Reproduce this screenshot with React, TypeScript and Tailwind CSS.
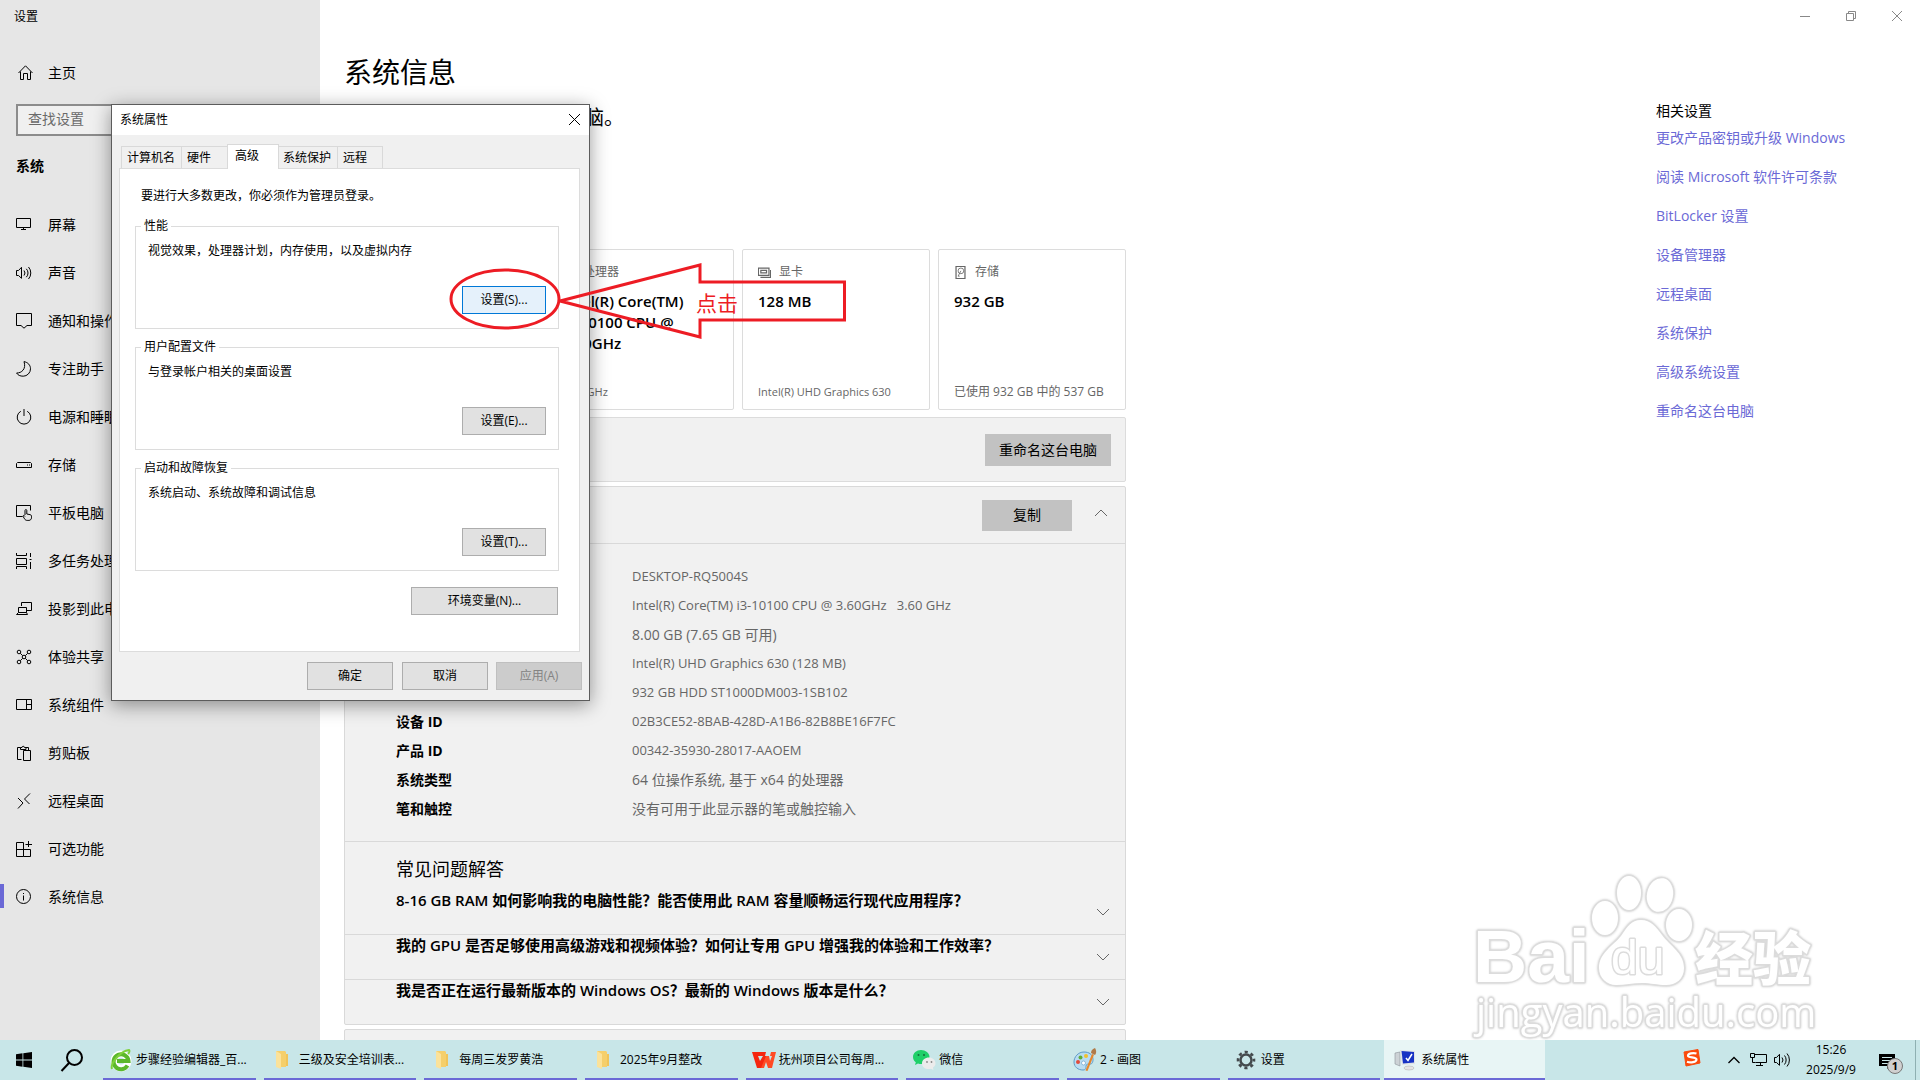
import React from 'react';

type NavItem = { label: string; icon: React.ReactNode; active?: boolean };

const Glyph = ({ children, size = 16, color = 'currentColor' }: { children: React.ReactNode; size?: number; color?: string }) => (
  <svg width={size} height={size} viewBox="0 0 16 16" fill="none" stroke={color} strokeWidth={1} className="shrink-0">
    {children}
  </svg>
);

const Chevron = ({ up }: { up?: boolean }) => (
  <svg width="14" height="8" viewBox="0 0 14 8" fill="none" stroke="#666" className="shrink-0">
    <path d={up ? 'M1 7l6-6 6 6' : 'M1 1l6 6 6-6'} />
  </svg>
);

const navItems: NavItem[] = [
  { label: '屏幕', icon: <path d="M.5 1.5h14v9H.5zM7.5 10.5v2M5 12.5h5" /> },
  { label: '声音', icon: <path d="M.5 5.5h2l3-3.2v11L2.5 10.5h-2zM8 5.5a4 4 0 0 1 0 5M10.300 3.800a6 6 0 0 1 0 8.400M12.500 2a9 9 0 0 1 0 12" /> },
  { label: '通知和操作', icon: <path d="M.5.5h15v12h-4.500L8 15.200 5 12.500H.5z" /> },
  { label: '专注助手', icon: <path d="M8 .6c4 .8 6.500 3.600 6.500 7.200a7.400 7.400 0 0 1-7.300 7.400c-3 0-5.300-1-6.600-3.200C5.500 12.200 10.500 8 8 .6z" /> },
  { label: '电源和睡眠', icon: <path d="M8 0v7M4.800 2.300a6.800 6.800 0 1 0 6.400 0" /> },
  { label: '存储', icon: <path d="M1.500 5.500h13l1 1v4H.5v-4zM11 8h1M13 8h1" /> },
  { label: '平板电脑', icon: <path d="M6.500 11.500h-6v-11h14v5M9 10V5.500c0-1.300 1.800-1.300 1.800 0V9l3.500.7c.8.2 1.200.8 1.200 1.500v1.600c0 1.400-1.200 2.600-2.600 2.600h-1.700c-1.200 0-2-.5-2.600-1.500L6.800 11c.8-1 1.600-.5 2.200.4" /> },
  { label: '多任务处理', icon: <path d="M.5 0v2.500h10V0M.5 5.500h10v6H.5zM.5 16v-2.500h10V16M14.500 0v4M14.500 9v7M13.500 6.500h2" /> },
  { label: '投影到此电脑', icon: <path d="M5.500 5V1.500h10v8h-4.500M2.500 6.500h8v5h-8zM2.500 11.500l-2 2h11l-1-2" /> },
  {
    label: '体验共享',
    icon: (
      <>
        <circle cx="3" cy="3" r="1.800" /><circle cx="13" cy="3" r="1.800" />
        <circle cx="3" cy="13" r="1.800" /><circle cx="13" cy="13" r="1.800" />
        <circle cx="8" cy="8" r="1.800" />
        <path d="M4.300 4.300l2.400 2.400M11.700 4.300L9.300 6.700M4.300 11.700l2.400-2.400M11.700 11.700L9.300 9.300" />
      </>
    ),
  },
  { label: '系统组件', icon: <path d="M.5 2.500h15v10H.5zM10.500 2.500v10M10.500 7.500h5" /> },
  { label: '剪贴板', icon: <path d="M5.500 14.500h-4v-12h3M9.500 2.500h3v3M4.500 4.500v-2h1.500a1.200 1.200 0 0 1 2.400 0h1.600v2zM7.500 5.500h7v10h-7z" /> },
  { label: '远程桌面', icon: <path d="M2 5l5 5-5 5.500M14 .5L8.500 6l5 5" /> },
  { label: '可选功能', icon: <path d="M.5 1.500h7v14h-7zM.5 8.500h14v7h-7M12.500 0v6M9.500 3.500h6.500" /> },
  { label: '系统信息', active: true, icon: <><circle cx="7.500" cy="7.500" r="7" /><path d="M7.500 6.500v5M7.500 4v1" /></> },
];

const specs = [
  ['设备名称', 'DESKTOP-RQ5004S'],
  ['处理器', 'Intel(R) Core(TM) i3-10100 CPU @ 3.60GHz\u00a0\u00a0 3.60 GHz'],
  ['机带 RAM', '8.00 GB (7.65 GB 可用)'],
  ['图形卡', 'Intel(R) UHD Graphics 630 (128 MB)'],
  ['存储', '932 GB HDD ST1000DM003-1SB102'],
  ['设备 ID', '02B3CE52-8BAB-428D-A1B6-82B8BE16F7FC'],
  ['产品 ID', '00342-35930-28017-AAOEM'],
  ['系统类型', '64 位操作系统, 基于 x64 的处理器'],
  ['笔和触控', '没有可用于此显示器的笔或触控输入'],
];

const links = ['更改产品密钥或升级 Windows', '阅读 Microsoft 软件许可条款', 'BitLocker 设置', '设备管理器', '远程桌面', '系统保护', '高级系统设置', '重命名这台电脑'];

const hasChinese = (text: string) => /[\u4e00-\u9fff]/.test(text);

const Sidebar = () => (
  <aside className="w-[320px] shrink-0 bg-[#e6e6e6]">
    <div className="flex h-[34px] items-center pl-3.5 text-xs">设置</div>
    <a href="#home" className="mt-[15px] flex h-12 items-center gap-3.5 pl-[18px] text-sm">
      <Glyph><path d="M.5 8L7.500.8 14.500 8M2.500 6.500v8h3v-6h4v6h3v-8" /></Glyph>
      主页
    </a>
    <input
      type="text"
      aria-label="查找设置"
      placeholder="查找设置"
      className="mx-4 mt-[7px] block h-8 w-[288px] border-2 border-[#8c8c8c] bg-[#f0f0f0] px-2.5 pb-1 text-sm placeholder:text-[#6a6a6a]"
    />
    <h2 className="mt-5 pl-4 text-sm leading-5 font-bold">系统</h2>
    <nav className="mt-[25px]">
      {navItems.map((item) => (
        <a key={item.label} href="#nav" className="relative flex h-12 items-center gap-4 pl-4 text-sm">
          {item.active && <span className="absolute top-[11px] left-0 h-6 w-1 bg-[#6b69d6]" />}
          <Glyph>{item.icon}</Glyph>
          {item.label}
        </a>
      ))}
    </nav>
  </aside>
);

const Card = ({ icon, title, value, note }: { icon: React.ReactNode; title: string; value: React.ReactNode; note: string }) => (
  <div className="flex h-[161px] w-[188px] shrink-0 flex-col rounded-xs border border-[#dcdcdc] bg-white px-[15px] pt-3.5 pb-[9px] first:w-auto first:flex-1">
    <div className="flex items-center gap-2 text-xs leading-4 text-[#666]">
      <Glyph size={13} color="#666">{icon}</Glyph>
      {title}
    </div>
    <div className="mt-[11px] text-[15px] leading-[21px] font-semibold">{value}</div>
    <div className={hasChinese(note) ? 'mt-auto text-xs leading-4 whitespace-nowrap text-[#666]' : 'mt-auto text-[11px] leading-4 whitespace-nowrap text-[#666]'}>{note}</div>
  </div>
);

const Faq = ({ text }: { text: string }) => (
  <div className="flex h-[45px] justify-between border-t border-[#d9d9d9] pl-[51px]">
    <p className="text-[15px] leading-5 font-semibold">{text}</p>
    <button aria-label="展开" className="mt-[18px] mr-[15px] h-2"><Chevron /></button>
  </div>
);

const Main = () => (
  <main className="flex min-w-0 flex-1 flex-col overflow-hidden">
    <div className="flex h-8 shrink-0 justify-end text-[#888]">
      <button aria-label="最小化" className="flex w-[46px] items-center justify-center"><svg width="10" height="10" stroke="currentColor"><path d="M0 5.500h10" /></svg></button>
      <button aria-label="还原" className="flex w-[46px] items-center justify-center"><svg width="10" height="10" fill="none" stroke="currentColor"><path d="M.5 2.500h7v7h-7zM2.500 2.500v-2h7v7h-2" /></svg></button>
      <button aria-label="关闭" className="flex w-[46px] items-center justify-center"><svg width="10" height="10" stroke="currentColor"><path d="M0 0l10 10M10 0L0 10" /></svg></button>
    </div>
    <div className="flex justify-between pl-6">
      <section className="w-[782px] shrink-0">
        <h1 className="mt-5 text-[28px] leading-10">系统信息</h1>
        <p className="mt-3 text-xl leading-7">系统正在监控并保护你的电脑。</p>
        <div className="mt-[117px] flex gap-2">
          <Card title="设备" value="DESKTOP" note="" icon={<path d="M.5 2.500h15v10H.5z" />} />
          <Card title="处理器" value={<>Intel(R) Core(TM)<br />i3-10100 CPU @<br />3.60GHz</>} note="3.60 GHz" icon={<path d="M2.500 2.500h11v11h-11zM5.500 5.500h5v5h-5z" />} />
          <Card title="显卡" value="128 MB" note="Intel(R) UHD Graphics 630" icon={<path d="M.5 2.500h13v9H.5zM3.500 5.500h7v3h-7zM15.500 5v9H3" strokeWidth={1.500} />} />
          <Card title="存储" value="932 GB" note="已使用 932 GB 中的 537 GB" icon={<><path d="M2.500.5h11v15h-11z" strokeWidth={1.500} /><circle cx="8.500" cy="6" r="3.500" /><path d="M8.500 6L5 12.500h2" /></>} />
        </div>
        <div className="mt-[7px] flex h-[65px] items-center justify-end rounded-xs border border-[#dcdcdc] bg-[#f1f1f1] pr-3.5">
          <button className="h-8 w-[126px] bg-[#c2c2c2] text-sm">重命名这台电脑</button>
        </div>
        <div className="mt-1 rounded-xs border border-[#d9d9d9] bg-[#f1f1f1]">
          <div className="flex h-[57px] items-center justify-end border-b border-[#d9d9d9] pr-[17px]">
            <button className="h-[31px] w-[90px] bg-[#c2c2c2] text-sm">复制</button>
            <button aria-label="折叠" className="mb-1 ml-[22px]"><Chevron up /></button>
          </div>
          <dl className="pt-[18px] pb-[18px] pl-[51px]">
            {specs.map(([name, value]) => (
              <div key={name} className="flex h-[29px] items-center">
                <dt className="w-[236px] text-sm font-bold">{name}</dt>
                <dd className={hasChinese(value) ? 'text-sm text-[#666]' : 'text-[13px] text-[#666]'}>{value}</dd>
              </div>
            ))}
          </dl>
          <div className="h-[93px] border-t border-[#d9d9d9] pt-[15px] pl-[51px]">
            <h2 className="text-lg leading-6">常见问题解答</h2>
            <div className="flex justify-between">
              <p className="mt-[7px] text-[15px] leading-6 font-semibold">8-16 GB RAM 如何影响我的电脑性能？能否使用此 RAM 容量顺畅运行现代应用程序？</p>
              <button aria-label="展开" className="mt-[27px] mr-[15px] h-2"><Chevron /></button>
            </div>
          </div>
          <Faq text="我的 GPU 是否足够使用高级游戏和视频体验？如何让专用 GPU 增强我的体验和工作效率？" />
          <Faq text="我是否正在运行最新版本的 Windows OS？最新的 Windows 版本是什么？" />
        </div>
        <div className="mt-1 h-12 rounded-xs border border-[#d9d9d9] bg-[#f1f1f1]" />
      </section>
      <aside className="w-[264px] pt-[69px]">
        <h2 className="text-sm leading-5">相关设置</h2>
        <ul className="mt-[7px] text-sm">
          {links.map((link) => (
            <li key={link} className="h-[39px] leading-5">
              <a href="#related" className="text-[#6b69d6]">{link}</a>
            </li>
          ))}
        </ul>
      </aside>
    </div>
  </main>
);

const buttonStyle = 'h-7 border border-[#adadad] bg-[#e1e1e1] text-xs';

const Group = ({ title, text, button, focused }: { title: string; text: string; button: string; focused?: boolean }) => (
  <fieldset className="mb-2.5 flex h-[111px] flex-col border border-[#dcdcdc] pr-3 pl-3">
    <legend className="-ml-[7px] px-[3px] leading-4">{title}</legend>
    <p className="mt-[9px] leading-4">{text}</p>
    <button className={focused ? 'mt-[27px] h-7 w-[84px] self-end border border-[#0078d7] bg-[#e5f1fb] text-xs' : 'mt-[27px] h-7 w-[84px] self-end border border-[#adadad] bg-[#e1e1e1] text-xs'}>
      {button}
    </button>
  </fieldset>
);

const tabStyle = 'h-[22px] border-t border-l border-[#d9d9d9] bg-[#f0f0f0] pl-[5px] text-left';

const SystemProperties = () => (
  <div role="dialog" aria-label="系统属性" className="absolute top-[104px] left-[111px] w-[479px] border border-[#5c5c5c] bg-[#f0f0f0] text-xs shadow-[0_4px_18px_rgba(0,0,0,0.4)]">
    <div className="flex h-[30px] items-center justify-between bg-white pr-[9px] pl-2">
      系统属性
      <button aria-label="关闭" className="pb-0.5"><svg width="11" height="11" stroke="#000"><path d="M0 0l11 11M11 0L0 11" /></svg></button>
    </div>
    <div role="tablist" className="flex h-[33px] items-end pl-[9px]">
      <button role="tab" className={`${tabStyle} w-[60px]`}>计算机名</button>
      <button role="tab" className={`${tabStyle} w-[46px]`}>硬件</button>
      <button role="tab" aria-selected className="relative z-10 -mb-px h-[25px] w-[52px] border border-b-0 border-[#d9d9d9] bg-white pb-[3px] pl-[7px] text-left">高级</button>
      <button role="tab" className="h-[22px] w-[58px] border-t border-[#d9d9d9] bg-[#f0f0f0] pl-1 text-left">系统保护</button>
      <button role="tab" className={`${tabStyle} w-[46px] border-r`}>远程</button>
    </div>
    <div className="mr-[9px] ml-[7px] border border-[#dcdcdc] bg-white pt-[19px] pr-5 pb-9 pl-[15px]">
      <p className="mb-3.5 pl-1.5 leading-4">要进行大多数更改，你必须作为管理员登录。</p>
      <Group title="性能" text="视觉效果，处理器计划，内存使用，以及虚拟内存" button="设置(S)..." focused />
      <Group title="用户配置文件" text="与登录帐户相关的桌面设置" button="设置(E)..." />
      <Group title="启动和故障恢复" text="系统启动、系统故障和调试信息" button="设置(T)..." />
      <div className="flex justify-end pt-1.5 pr-px">
        <button className={`${buttonStyle} w-[147px]`}>环境变量(N)...</button>
      </div>
    </div>
    <div className="flex justify-end gap-2 pt-2.5 pr-[7px] pb-2.5">
      <button className={`${buttonStyle} w-[86px]`}>确定</button>
      <button className={`${buttonStyle} ml-px w-[86px]`}>取消</button>
      <button disabled className="h-7 w-[86px] border border-[#bfbfbf] bg-[#cccccc] text-xs text-[#838383]">应用(A)</button>
    </div>
  </div>
);

const Callout = () => (
  <svg width="400" height="90" viewBox="0 0 400 90" className="pointer-events-none absolute top-[255px] left-[448px]" fill="none" stroke="#ed1c24" strokeWidth="3">
    <ellipse cx="57" cy="44" rx="54" ry="29" />
    <path d="M112 46L252 10v17h144.500v38H252v17z" />
    <text x="248" y="56" fontSize="21" fill="#ed1c24" stroke="none">点击</text>
  </svg>
);

const WatermarkShapes = () => (
  <>
    <text x="3" y="122" fontSize="75" fontWeight="700" fontFamily="'Liberation Sans', sans-serif">Bai</text>
    <ellipse cx="135" cy="58" rx="13" ry="17" />
    <ellipse cx="159" cy="33" rx="12" ry="17" />
    <ellipse cx="190" cy="35" rx="13" ry="17" transform="rotate(12 190 35)" />
    <ellipse cx="209" cy="65" rx="13" ry="16" />
    <path d="M171 60c10 0 15 7 21 15 8 11 22 18 22 33 0 11-8 17-18 17-9 0-15-2-24-2s-17 2-26 2c-9 0-17-7-17-17 0-15 14-22 22-32 6-9 10-16 20-16z" />
    <text x="141" y="114" fontSize="48" fontFamily="'Liberation Sans', sans-serif">du</text>
    <text x="225" y="120" fontSize="58" fontWeight="900" fontFamily="'Noto Sans CJK SC', sans-serif">经验</text>
    <text x="6" y="167" fontSize="40" fontFamily="'Open Sans', sans-serif">jingyan.baidu.com</text>
  </>
);

const Watermark = () => (
  <svg
    width="360"
    height="180"
    viewBox="0 0 360 180"
    className="pointer-events-none absolute right-[90px] bottom-10 drop-shadow-[0_0_1px_rgba(0,0,0,0.2)]"
    fill="#fff"
    stroke="#dcdcdc"
    strokeWidth="3"
    paintOrder="stroke"
    strokeLinejoin="round"
  >
    <WatermarkShapes />
  </svg>
);

const FolderIcon = () => (
  <svg width="14" height="20" viewBox="0 0 14 20">
    <path d="M1 1h9l1 1v15H1z" fill="#f5cf6b" />
    <path d="M1 1l5 3v15l-5-2z" fill="#fbe29a" />
    <path d="M11 4h2v12h-2z" fill="#f0c45a" />
  </svg>
);

const BrowserIcon = () => (
  <svg width="22" height="24" viewBox="0 0 22 24" fill="none">
    <circle cx="11" cy="13" r="7" stroke="#fff" strokeWidth="7" />
    <path d="M17.500 17.500A7.500 7.500 0 1 1 18.500 13H7" stroke="#5cb82c" strokeWidth="4" />
    <path d="M2 21C0 16 10 3 19 2c1 1 0 3-1 4" stroke="#7fd13b" strokeWidth="2" />
  </svg>
);

const WpsIcon = () => (
  <svg width="24" height="16" viewBox="0 0 24 16">
    <path d="M0 0h14l-1 4H6l2 5 3-5h4l-5 12H5z" fill="#f5260f" />
    <path d="M14 4h3l1 5 2-5h-2l1-4h5l-4 16h-4l-2-6-2 6h-3z" fill="#ff4a24" />
  </svg>
);

const WechatIcon = () => (
  <svg width="24" height="24" viewBox="0 0 24 24">
    <path d="M9 2C4.500 2 1 5 1 9c0 2.200 1 4 2.800 5.300L3 17l3-1.500c6 2 11.500-1.500 11.500-6.500 0-4-4-7-8.500-7z" fill="#1fd069" />
    <path d="M17 9.500c-4 0-7 2.500-7 6 0 3.700 4 6.500 9 5.300l2.500 1.200-.6-2.400c1.700-1 2.600-2.500 2.600-4.100 0-3.500-3-6-6.500-6z" fill="#ececec" />
    <g fill="#126b3a"><circle cx="6.500" cy="7" r="1" /><circle cx="12" cy="7" r="1" /></g>
    <g fill="#888"><circle cx="15" cy="14" r=".9" /><circle cx="19.500" cy="14" r=".9" /></g>
  </svg>
);

const PaintIcon = () => (
  <svg width="24" height="24" viewBox="0 0 24 24">
    <path d="M11 4C5 4 1 9 1 14s4 8 9 8c3 0 3-2 3-4s2-2 5-2c3-1 4-12-7-12z" fill="#b8dcf2" stroke="#5d9bc7" />
    <circle cx="5" cy="14" r="2" fill="#e14b3b" /><circle cx="7.500" cy="9.500" r="2" fill="#5fae3c" />
    <circle cx="13" cy="8" r="2" fill="#f2c12e" /><circle cx="10.500" cy="15" r="2" fill="#fff" stroke="#5d9bc7" strokeWidth=".6" />
    <path d="M19 6l2 .8L14.500 23l-2-.5z" fill="#e8872b" />
    <path d="M18 5c0-3 2-4 4-5 1 2 2 4 0 7z" fill="#b07a48" />
  </svg>
);

const GearIcon = () => (
  <svg width="20" height="20" viewBox="0 0 20 20" fill="none" stroke="#444a4d">
    <circle cx="10" cy="10" r="5.500" strokeWidth="2.500" />
    <circle cx="10" cy="10" r="8" strokeWidth="2.600" strokeDasharray="3.140 3.140" strokeDashoffset="1.570" />
  </svg>
);

const MonitorIcon = () => (
  <svg width="24" height="22" viewBox="0 0 24 22">
    <path d="M1 4l5-1v14l-5-2z" fill="#cdd2d6" stroke="#8b9299" strokeWidth=".6" />
    <path d="M6 1l15 1v13L8 16z" fill="#dfe3e6" />
    <path d="M7.500 2l12.500 1v10.500L9 14.500z" fill="#1633c4" />
    <path d="M12 9l2 2.500L18 5" fill="none" stroke="#fff" strokeWidth="1.500" />
    <ellipse cx="15" cy="19" rx="5" ry="2" fill="#e4e4e4" stroke="#b5b5b5" strokeWidth=".6" />
  </svg>
);

const tasks = [
  { label: '步骤经验编辑器_百...', icon: <BrowserIcon /> },
  { label: '三级及安全培训表...', icon: <FolderIcon />, folder: true },
  { label: '每周三发罗黄浩', icon: <FolderIcon />, folder: true },
  { label: '2025年9月整改', icon: <FolderIcon />, folder: true },
  { label: '抚州项目公司每周...', icon: <WpsIcon /> },
  { label: '微信', icon: <WechatIcon /> },
  { label: '2 - 画图', icon: <PaintIcon /> },
  { label: '设置', icon: <GearIcon /> },
  { label: '系统属性', icon: <MonitorIcon />, active: true },
];

const Taskbar = () => (
  <footer className="relative z-20 flex h-10 shrink-0 items-center bg-[#c8e6e8] text-xs">
    <button aria-label="开始" className="ml-4">
      <svg width="16" height="16" viewBox="0 0 16 16" fill="#000"><path d="M0 2.200L6.500 1.300v6.200H0zM7.300 1.200L16 0v7.500H7.300zM0 8.400h6.500v6.300L0 13.800zM7.300 8.400H16V16l-8.700-1.200z" /></svg>
    </button>
    <button aria-label="搜索" className="ml-7">
      <svg width="24" height="24" viewBox="0 0 24 24" fill="none" stroke="#000" strokeWidth="2"><circle cx="14.500" cy="9.500" r="7.500" /><path d="M9 15l-7.500 8" /></svg>
    </button>
    <div className="ml-[15px] grid h-full w-[1446px] shrink-0 grid-cols-9">
      {tasks.map((task) => (
        <button key={task.label} className="relative flex items-center pl-2.5">
          {task.active && <span className="absolute inset-0 bg-[#e8f5f5]" />}
          <span className="relative flex w-6 shrink-0 justify-center">{task.icon}</span>
          <span className={task.folder ? 'ml-1 pl-px whitespace-nowrap' : 'relative ml-[3px] whitespace-nowrap'}>{task.label}</span>
          <span className={task.active ? 'absolute inset-x-0 bottom-0 h-0.5 bg-[#6b69d6]' : 'absolute inset-x-1 bottom-0 h-0.5 bg-[#6b69d6]'} />
        </button>
      ))}
    </div>
    <div className="ml-auto flex h-full items-center">
      <svg width="18" height="18" viewBox="0 0 18 18" className="mb-1">
        <path d="M1 3l14-2.500L17 14 3 17z" fill="#fb4a0c" stroke="#fb4a0c" strokeLinejoin="round" />
        <path d="M13.500 4.500C10 3.500 5 4.500 5 6.800s8.500 1 8.500 3.700-6 3.500-9.500 2.200" fill="none" stroke="#fff" strokeWidth="2.200" />
      </svg>
      <button aria-label="显示隐藏的图标" className="ml-[27px]"><svg width="12" height="8" fill="none" stroke="#000" strokeWidth="1.300"><path d="M.5 7L6 1.500 11.500 7" /></svg></button>
      <svg width="17" height="14" viewBox="0 0 17 14" className="ml-2.5" fill="none" stroke="#000"><path d="M4.500 1.500h12v8h-11M.5.5h4v4h-4zM2.500 4.500v5h3M10.500 9.500v3M6 12.500h7" /></svg>
      <svg width="17" height="16" viewBox="0 0 17 16" className="ml-[7px]" fill="none" stroke="#000"><path d="M.5 5.500h2l3-3.200v11l-3-2.800h-2zM8 5.500a4 4 0 0 1 0 5M10.500 3.500a7 7 0 0 1 0 9M13 1.500a10 10 0 0 1 0 13" /></svg>
      <div className="ml-3 w-14 text-center leading-5"><div>15:26</div><div>2025/9/9</div></div>
      <button aria-label="通知" className="relative ml-5 h-6 w-6">
        <svg width="16" height="16" viewBox="0 0 16 16" className="mt-1"><path d="M0 0h16v12h-5l-3 3v-3H0z" fill="#000" /><path d="M3 3.500h10M3 6.500h10M3 9.500h7" stroke="#c8e6e8" /></svg>
        <span className="absolute top-2.5 left-2 flex h-4 w-4 items-center justify-center rounded-full border border-[#777] bg-[#d0d0d0] text-[11px] font-bold">1</span>
      </button>
      <span className="mr-1 ml-3 h-10 w-px bg-[#8fb0b2]" />
    </div>
  </footer>
);

export default function App() {
  return (
    <div className="relative flex h-screen flex-col overflow-hidden bg-white font-['Open_Sans','Noto_Sans_CJK_SC',sans-serif] text-black">
      <div className="flex min-h-0 flex-1 overflow-hidden">
        <Sidebar />
        <Main />
      </div>
      <Watermark />
      <SystemProperties />
      <Callout />
      <Taskbar />
    </div>
  );
}
